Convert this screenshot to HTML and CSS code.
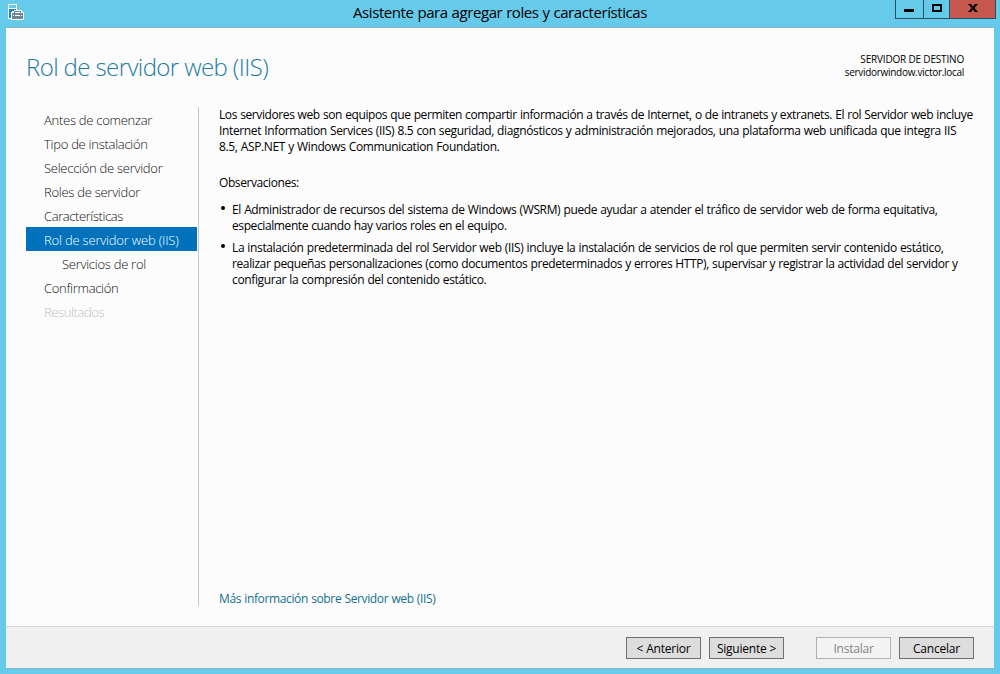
FILE: index.html
```html
<!DOCTYPE html>
<html lang="es">
<head>
<meta charset="utf-8">
<title>Asistente para agregar roles y características</title>
<link rel="stylesheet" href="styles.css">
</head>
<body>
<div class="window">
  <header class="titlebar">
    <svg class="app-icon" width="16" height="16" viewBox="0 0 16 16" shape-rendering="crispEdges">
      <path fill="#fff" d="M0 0h9v6h5v2h2v8H3v-1H0z"/>
      <path fill="#66caea" d="M1 1h7v3H1z"/>
      <path fill="#1c86d1" d="M1 5h7v1H6v1H4v1H3v6H1z"/>
      <path fill="#6f8794" d="M6 7h7v2h2v6H4V9h2z"/>
      <path fill="#fff" d="M7 8h5v1H7zM5 11h9v1H5z"/>
      <path fill="#6f8794" d="M6 11h1v2H6zM12 11h1v2h-1z"/>
    </svg>
    <h1 class="caption">Asistente para agregar roles y características</h1>
    <div class="controls">
      <span class="control minimize"><svg width="10" height="3"><rect width="10" height="3"/></svg></span>
      <span class="control maximize"><svg width="10" height="8"><path fill="none" stroke="#000" stroke-width="2" d="M1 1h8v6H1z"/></svg></span>
      <span class="control close"><svg width="10" height="8"><path d="M0 0h3l2 2.500L7 0h3L6.500 4 10 8H7L5 5.500 3 8H0l3.500-4z"/></svg></span>
    </div>
  </header>
  <main class="client">
    <div class="page-head">
      <h2 class="heading">Rol de servidor web (IIS)</h2>
      <div class="target">
        <div class="target-label">SERVIDOR DE DESTINO</div>
        <div class="target-name">servidorwindow.victor.local</div>
      </div>
    </div>
    <div class="body">
      <nav class="steps">
        <div class="step">Antes de comenzar</div>
        <div class="step">Tipo de instalación</div>
        <div class="step">Selección de servidor</div>
        <div class="step">Roles de servidor</div>
        <div class="step tight">Características</div>
        <div class="step active">Rol de servidor web (IIS)</div>
        <div class="step child">Servicios de rol</div>
        <div class="step loose">Confirmación</div>
        <div class="step disabled tight">Resultados</div>
      </nav>
      <section class="content">
        <p class="intro">
          <span class="line-snug">Los servidores web son equipos que permiten compartir información a través de Internet, o de intranets y extranets. El rol Servidor web incluye</span><br>
          Internet Information Services (IIS) 8.5 con seguridad, diagnósticos y administración mejorados, una plataforma web unificada que integra IIS<br>
          8.5, ASP.NET y Windows Communication Foundation.
        </p>
        <p class="notes-title">Observaciones:</p>
        <ul class="notes">
          <li>El Administrador de recursos del sistema de Windows (WSRM) puede ayudar a atender el tráfico de servidor web de forma equitativa,<br>
            <span class="line-snug">especialmente cuando hay varios roles en el equipo.</span></li>
          <li>La instalación predeterminada del rol Servidor web (IIS) incluye la instalación de servicios de rol que permiten servir contenido estático,<br>
            <span class="line-snug">realizar pequeñas personalizaciones (como documentos predeterminados y errores HTTP), supervisar y registrar la actividad del servidor y</span><br>
            configurar la compresión del contenido estático.</li>
        </ul>
        <a class="more">Más información sobre Servidor web (IIS)</a>
      </section>
    </div>
    <footer class="footer">
      <button class="btn">&lt; Anterior</button>
      <button class="btn">Siguiente &gt;</button>
      <button class="btn install" disabled>Instalar</button>
      <button class="btn">Cancelar</button>
    </footer>
  </main>
</div>
</body>
</html>
```
FILE: styles.css
```css
* { box-sizing: border-box; }
body { margin: 0; font-family: "Open Sans", "Noto Sans", sans-serif; font-size: 12px; color: #000; }
.window { width: 1000px; height: 674px; background: #66caea; padding: 0 6px 5px; display: flex; flex-direction: column; }
.titlebar { height: 27px; display: flex; align-items: flex-start; }
.app-icon { margin: 4px 0 0 2px; }
.caption { flex: 1; margin: 0; font-size: 15px; font-weight: 400; line-height: 25px; letter-spacing: -0.42px; word-spacing: 0.4px; white-space: nowrap; padding-left: 329px; }
.controls { display: flex; height: 19px; margin-right: -2px; border: 1px solid #27505e; border-top: 0; }
.control { display: flex; justify-content: center; align-items: flex-start; }
.minimize { width: 27px; padding: 9px 1px 0 0; }
.maximize { width: 26px; padding-top: 4px; border-left: 1px solid #27505e; }
.close { width: 46px; padding-top: 4px; background: #c75850; border-left: 1px solid #27505e; }
.client { flex: 1; background: #fcfcfc; border-top: 1px solid #86b5c6; border-bottom: 1px solid #86b5c6; display: flex; flex-direction: column; white-space: nowrap; }
.page-head { height: 79px; display: flex; justify-content: space-between; padding: 22px 30px 0 20px; }
.heading { margin: 0; font-size: 24px; font-weight: 300; line-height: 34px; letter-spacing: -0.6px; color: #1f7b9e; }
.target { text-align: right; font-size: 10px; line-height: 13px; padding-top: 3px; }
.target-label { letter-spacing: -0.18px; }
.target-name { letter-spacing: -0.29px; }
.body { flex: 1; display: flex; }
.steps { flex: none; width: 193px; height: 499px; border-right: 1px solid #c8c8c8; padding: 0 1px 0 20px; }
.step { height: 24px; line-height: 26px; padding-left: 18px; font-size: 13px; font-weight: 300; letter-spacing: -0.27px; color: #111; }
.tight { letter-spacing: -0.41px; }
.loose { letter-spacing: -0.33px; }
.active { background: #0072bc; color: #fff; letter-spacing: -0.19px; }
.child { padding-left: 36px; }
.disabled { color: #c0c0c0; }
.loose { letter-spacing: -0.3px; }
.content { flex: 1; min-width: 0; height: 500px; padding-left: 20px; display: flex; flex-direction: column; line-height: 16px; letter-spacing: -0.36px; word-spacing: 0.4px; }
.line-snug { letter-spacing: -0.395px; }
.intro { margin: 0; }
.notes-title { margin: 20px 0 11px; letter-spacing: -0.42px; }
.notes { margin: 0; padding: 0 0 0 13px; list-style: none; }
.notes li { margin-bottom: 6px; position: relative; }
.notes li::before { content: ""; position: absolute; left: -11px; top: 4px; width: 4px; height: 4px; border-radius: 50%; background: #000; }
.more { margin-top: auto; color: #14718f; }
.footer { height: 42px; background: #f0f0f0; border-top: 1px solid #dadada; display: flex; justify-content: flex-end; gap: 8px; padding: 10px 20px 0; }
.btn { width: 75px; height: 22px; border: 1px solid #707070; background: #ddd; padding: 2px 0 0; font: inherit; line-height: 18px; letter-spacing: -0.22px; color: #000; }
.install { margin-left: 24px; border-color: #adb2b5; background: #f4f4f4; color: #838383; }
```
